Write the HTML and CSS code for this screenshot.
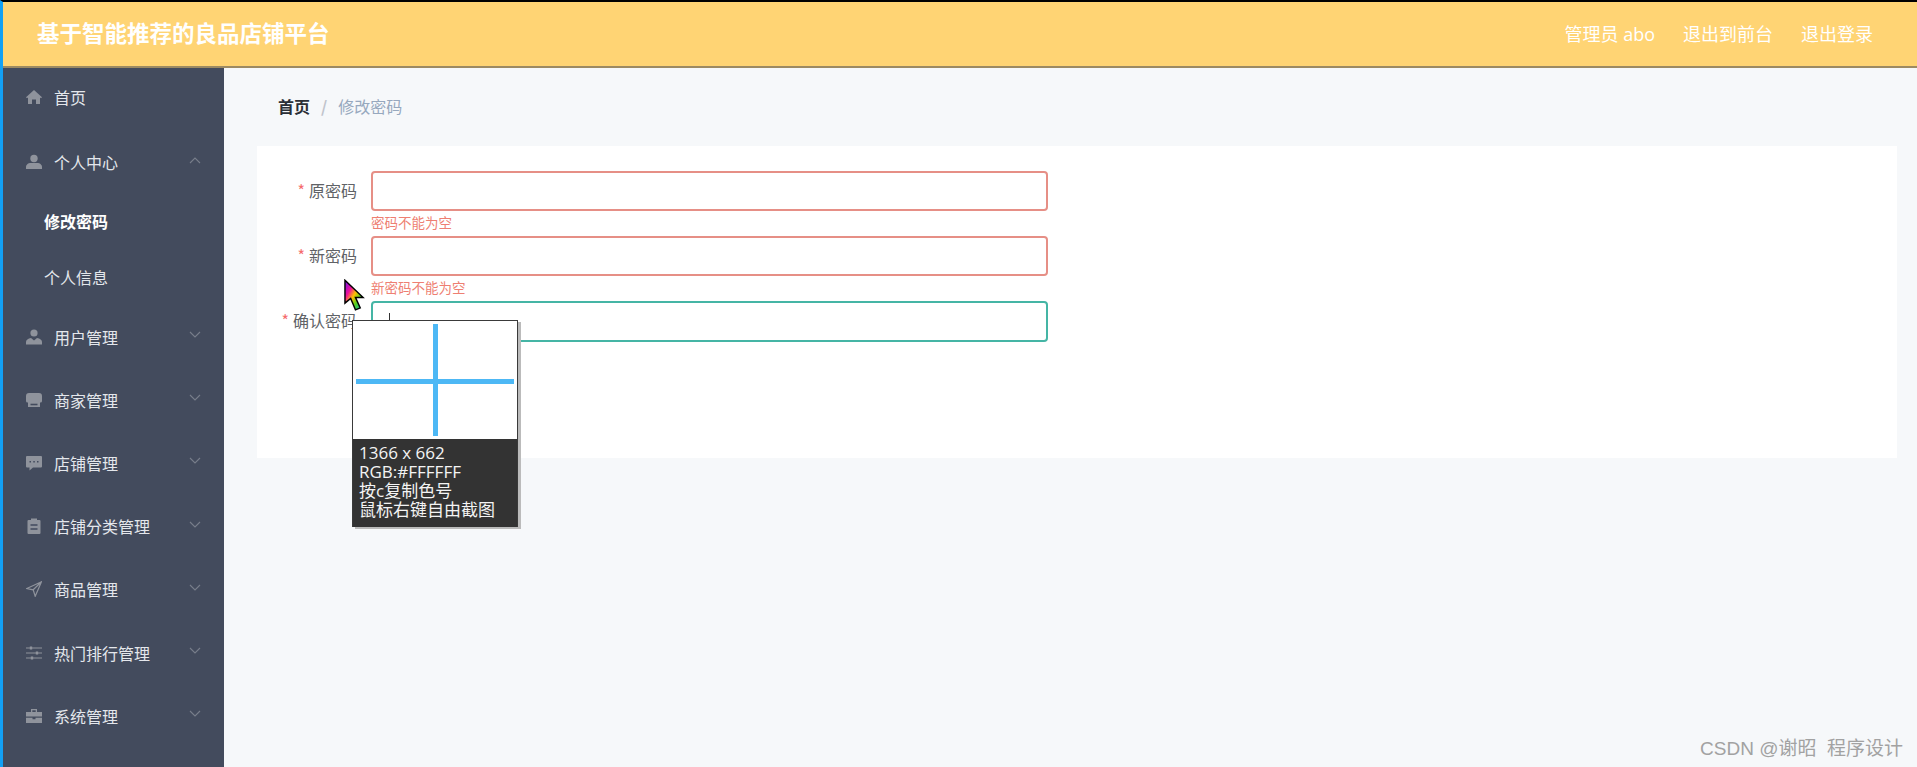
FILE: index.html
```html
<!DOCTYPE html>
<html lang="zh">
<head>
    <meta charset="UTF-8">
    <title>基于智能推荐的良品店铺平台</title>
    <link rel="stylesheet" href="styles.css">
</head>
<body>

    <header class="topbar">
        <div class="brand">基于智能推荐的良品店铺平台</div>
        <nav class="top-links">
            <span>管理员 abo</span>
            <span>退出到前台</span>
            <span>退出登录</span>
        </nav>
    </header>

    <div class="layout">
        <aside class="sidebar">
            <div class="menu-item home">
                <svg class="menu-icon" viewBox="0 0 16 16"><path d="M8 1 0 8.200l1 1.100 1-.9V15h4v-4.500h4V15h4V8.400l1 .9 1-1.100z"/></svg>
                <span>首页</span>
            </div>
            <div class="menu-item open">
                <svg class="menu-icon" viewBox="0 0 16 16"><circle cx="8" cy="4.500" r="3.700"/><path d="M0 15v-2c0-2.500 2.500-4 4.500-4h7c2 0 4.500 1.500 4.500 4v2z"/></svg>
                <span>个人中心</span>
                <svg class="chevron" viewBox="0 0 12 7"><path d="M1 6 6 1l5 5"/></svg>
            </div>
            <div class="sub-item active">修改密码</div>
            <div class="sub-item">个人信息</div>
            <div class="menu-item">
                <svg class="menu-icon" viewBox="0 0 16 16"><circle cx="8" cy="4" r="3.600"/><path d="M0 15.500V13c0-2 2-3.500 5-4l3 2.500L11 9c3 .5 5 2 5 4v2.500z"/></svg>
                <span>用户管理</span>
                <svg class="chevron" viewBox="0 0 12 7"><path d="m1 1 5 5 5-5"/></svg>
            </div>
            <div class="menu-item">
                <svg class="menu-icon" viewBox="0 0 16 16"><path d="M3 1h10a3 3 0 0 1 3 3v5a1.500 1.500 0 0 1-1.500 1.500H14V15H2v-4.500H1.500A1.500 1.500 0 0 1 0 9V4a3 3 0 0 1 3-3z"/><path class="cut" d="M4.500 12.500h7"/></svg>
                <span>商家管理</span>
                <svg class="chevron" viewBox="0 0 12 7"><path d="m1 1 5 5 5-5"/></svg>
            </div>
            <div class="menu-item">
                <svg class="menu-icon" viewBox="0 0 16 16"><path d="M1 1h14a1 1 0 0 1 1 1v9.500a1 1 0 0 1-1 1H7L3.500 15.500v-3H1a1 1 0 0 1-1-1V2a1 1 0 0 1 1-1z"/><path class="cut" d="M3.500 6.800h1.500M7.300 6.800h1.500M11 6.800h1.500"/></svg>
                <span>店铺管理</span>
                <svg class="chevron" viewBox="0 0 12 7"><path d="m1 1 5 5 5-5"/></svg>
            </div>
            <div class="menu-item">
                <svg class="menu-icon" viewBox="0 0 16 16"><path d="M2.500 2H5V.5h6V2h2.500a1 1 0 0 1 1 1v12a1 1 0 0 1-1 1h-11a1 1 0 0 1-1-1V3a1 1 0 0 1 1-1z"/><path class="cut" d="M4.500 7h7M4.500 11h7"/></svg>
                <span>店铺分类管理</span>
                <svg class="chevron" viewBox="0 0 12 7"><path d="m1 1 5 5 5-5"/></svg>
            </div>
            <div class="menu-item">
                <svg class="menu-icon line" viewBox="0 0 16 16"><path d="M15.500.7.800 7.500l6.400 1.300 2 6.500zM7.200 8.800 15.500.7"/></svg>
                <span>商品管理</span>
                <svg class="chevron" viewBox="0 0 12 7"><path d="m1 1 5 5 5-5"/></svg>
            </div>
            <div class="menu-item">
                <svg class="menu-icon line" viewBox="0 0 16 16"><path d="M0 3h16M0 8h16M0 13h16"/><path class="knob" d="M5 1.500v3M11 6.500v3M6 11.500v3"/></svg>
                <span>热门排行管理</span>
                <svg class="chevron" viewBox="0 0 12 7"><path d="m1 1 5 5 5-5"/></svg>
            </div>
            <div class="menu-item">
                <svg class="menu-icon" viewBox="0 0 16 16"><path d="M5 1h6v3h5v4.500H0V4h5zm1.300 1.300V4h3.400V2.300zM0 9.700h6.500v1.500h3V9.700H16V15H0z"/></svg>
                <span>系统管理</span>
                <svg class="chevron" viewBox="0 0 12 7"><path d="m1 1 5 5 5-5"/></svg>
            </div>
        </aside>

        <main class="content">
            <div class="breadcrumb">
                <b>首页</b>
                <i>/</i>
                <span>修改密码</span>
            </div>

            <section class="card">
                <div class="form-row">
                    <label class="form-label"><em>*</em> 原密码</label>
                    <div class="form-field">
                        <div class="text-input invalid"></div>
                        <div class="form-error">密码不能为空</div>
                    </div>
                </div>
                <div class="form-row">
                    <label class="form-label"><em>*</em> 新密码</label>
                    <div class="form-field">
                        <div class="text-input invalid"></div>
                        <div class="form-error">新密码不能为空</div>
                    </div>
                </div>
                <div class="form-row">
                    <label class="form-label"><em>*</em> 确认密码</label>
                    <div class="form-field">
                        <div class="text-input focused"><span class="caret"></span></div>
                    </div>
                </div>
            </section>
        </main>
    </div>

    <!-- screenshot tool magnifier, sits over the page -->
    <svg class="cursor" viewBox="0 0 22 34">
        <defs>
            <linearGradient id="rainbow" x1="0" y1="0" x2="1" y2="1">
                <stop offset="0" stop-color="#6a10f0"/>
                <stop offset=".3" stop-color="#f0109a"/>
                <stop offset=".5" stop-color="#ffc000"/>
                <stop offset=".7" stop-color="#50d020"/>
                <stop offset="1" stop-color="#00b8d8"/>
            </linearGradient>
        </defs>
        <path d="M1 1v24l6-5 5 12 5-2-5-11h8z" fill="url(#rainbow)" stroke="#000" stroke-width="1.500"/>
    </svg>

    <div class="magnifier">
        <div class="magnifier-view">
            <span class="cross-h"></span>
            <span class="cross-v"></span>
        </div>
        <div class="magnifier-info">
            <div>1366 x 662</div>
            <div>RGB:#FFFFFF</div>
            <div>按c复制色号</div>
            <div>鼠标右键自由截图</div>
        </div>
    </div>

    <div class="watermark">CSDN @谢昭&nbsp;&nbsp;程序设计</div>

</body>
</html>
```

FILE: styles.css
```css
* {
    box-sizing: border-box;
}

body {
    margin: 0;
    height: 767px;
    overflow: hidden;
    border-top: 2px solid #000;
    border-left: 3px solid #12a0f5;
    background: #f6f8fa;
    font-family: "Noto Sans CJK SC", "Noto Sans", sans-serif;
    font-size: 16px;
}

.topbar {
    height: 66px;
    padding: 0 44px 3px 34px;
    display: flex;
    justify-content: space-between;
    align-items: center;
    background: #ffd474;
    border-bottom: 2px solid #9c8a62;
    color: #fff;
}

.brand {
    margin-bottom: 2px;
    font-size: 22.500px;
    font-weight: 700;
}

.top-links {
    display: flex;
    gap: 28px;
    font-family: "Open Sans", "Noto Sans CJK SC", sans-serif;
    font-size: 18px;
}

.layout {
    display: flex;
    height: 699px;
}

.sidebar {
    width: 221px;
    flex-shrink: 0;
    background: #434b5d;
    color: #e4e7ec;
}

.menu-item {
    height: 63.200px;
    padding: 0 23px;
    display: flex;
    align-items: center;
}

.menu-item.home {
    height: 58px;
    margin-bottom: 5px;
}

.menu-item.open {
    height: 62px;
}

.menu-icon {
    width: 16px;
    height: 16px;
    margin-right: 12px;
    fill: #8f939c;
}

.menu-icon.line {
    fill: none;
    stroke: #8f939c;
    stroke-width: 1.200;
}

.menu-icon .knob {
    stroke-width: 2.400;
}

.menu-icon .cut {
    fill: none;
    stroke: #434b5d;
    stroke-width: 1.600;
}

.chevron {
    width: 12px;
    height: 7px;
    margin-left: auto;
    margin-bottom: 4px;
    fill: none;
    stroke: #787e8b;
    stroke-width: 1.100;
}

.sub-item {
    height: 56px;
    padding-left: 41px;
    display: flex;
    align-items: center;
}

.sub-item.active {
    color: #fff;
    font-weight: 700;
}

.content {
    flex: 1;
    padding: 0 20px 0 33px;
}

.breadcrumb {
    height: 78px;
    padding: 0 0 3px 21px;
    display: flex;
    align-items: center;
    color: #97a8be;
}

.breadcrumb b {
    color: #2b2f36;
}

.breadcrumb i {
    margin: 0 11px;
    color: #c0c4cc;
    font-style: normal;
    font-weight: 700;
}

.card {
    height: 312px;
    padding-top: 25px;
    background: #fff;
}

.form-row {
    height: 65px;
    display: flex;
}

.form-label {
    width: 100px;
    height: 40px;
    margin-right: 14px;
    padding-bottom: 3px;
    display: flex;
    align-items: center;
    justify-content: flex-end;
    color: #606266;
}

.form-label em {
    margin-right: 4px;
    color: #f56c6c;
    font-style: normal;
}

.form-field {
    width: 677px;
}

.text-input {
    height: 40px;
    padding-left: 16px;
    display: flex;
    align-items: center;
    background: #fff;
    border: 2px solid #ddd;
    border-radius: 4px;
}

.text-input.invalid {
    border-color: #e68f86;
}

.text-input.focused {
    height: 41px;
    border-color: #45b5a5;
}

.caret {
    width: 1px;
    height: 17px;
    background: #333;
}

.form-error {
    height: 25px;
    line-height: 23px;
    color: #ee7f72;
    font-size: 13.500px;
}

.cursor {
    position: absolute;
    left: 344px;
    top: 279px;
    width: 21px;
    height: 33px;
}

.magnifier {
    position: absolute;
    left: 352px;
    top: 320px;
    width: 166px;
    height: 207px;
    border: 1px solid #3a3a3a;
    border-bottom: 0;
    box-shadow: 3px 2px 0 #bbb;
}

.magnifier-view {
    position: relative;
    height: 118px;
    background: #fff;
}

.cross-h {
    position: absolute;
    left: 3px;
    right: 3px;
    top: 58px;
    height: 5px;
    background: #4db8f5;
}

.cross-v {
    position: absolute;
    left: 80px;
    top: 3px;
    bottom: 3px;
    width: 5px;
    background: #4db8f5;
}

.magnifier-info {
    height: 88px;
    padding: 4px 0 0 6px;
    background: #333;
    color: #f4f4f4;
    font-family: "Open Sans", "Noto Sans CJK SC", sans-serif;
    font-size: 17px;
    line-height: 19px;
    white-space: nowrap;
}

.watermark {
    position: absolute;
    right: 14px;
    bottom: 7px;
    color: #a2a2a2;
    font-family: "Liberation Sans", "Noto Sans CJK SC", sans-serif;
    font-size: 19px;
}
```
